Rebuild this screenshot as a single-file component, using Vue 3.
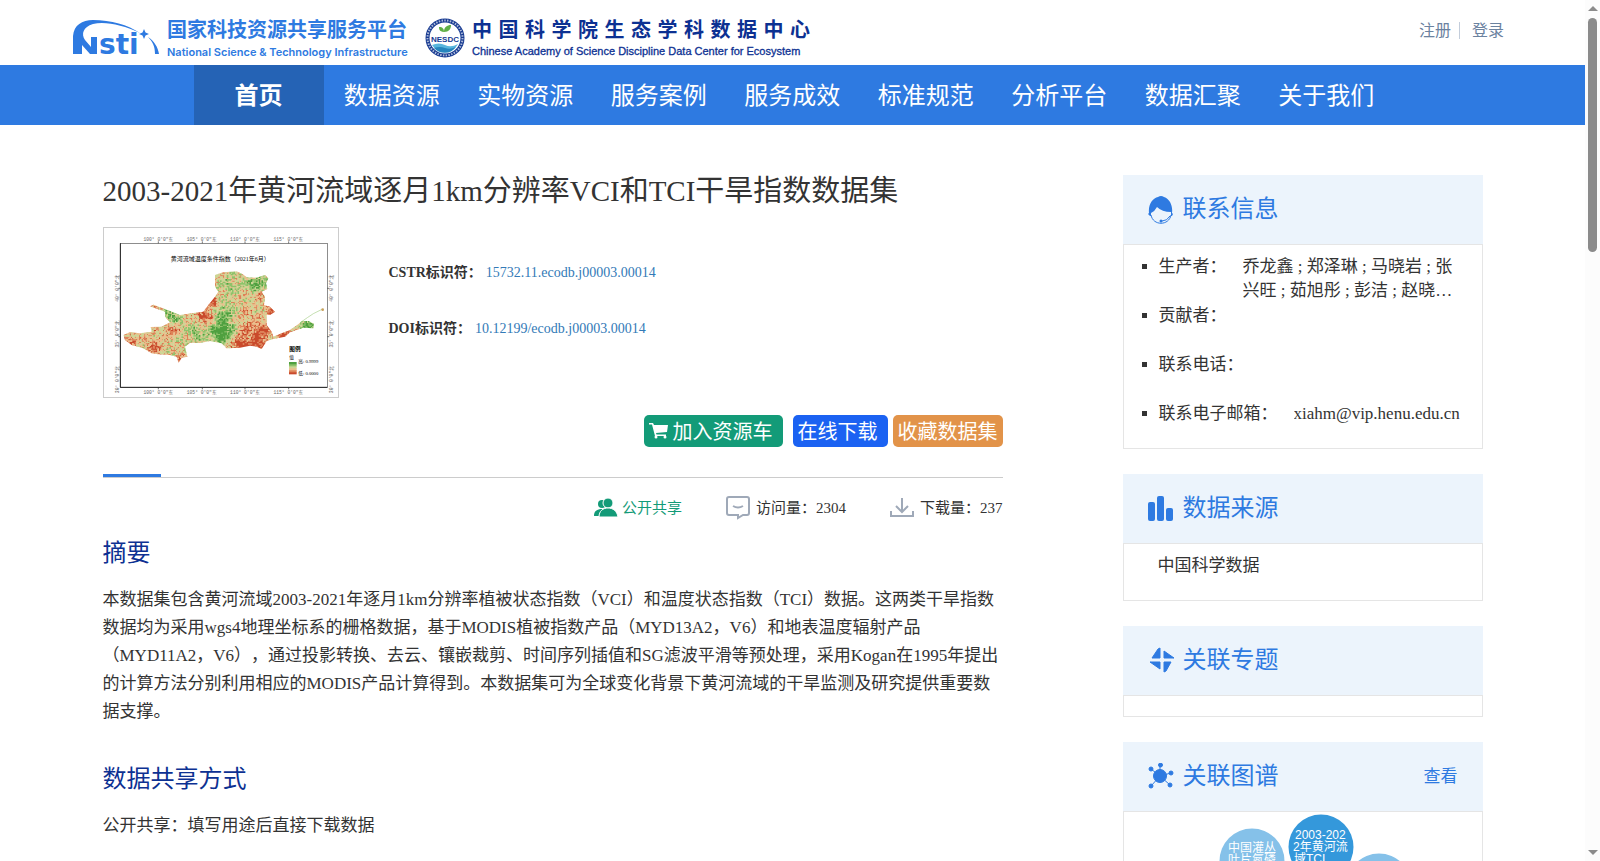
<template>
  <div class="window">
    <div class="page">
      <header class="top">
        <a class="brand" href="#">
          <svg class="nsti" viewBox="0 0 88 38" role="img" aria-label="Nsti">
            <path d="M0 34V16C1 5 9 0 20 0 38 0 55 5 67 13 50 5 32 1 20 4 10 7 8 14 12 20L18 27V17H24V34H17L9 25V34Z" />
            <path d="M71 9l1.500 3.500 3.500 1.500-3.500 1.500-1.500 3.500-1.500-3.500-3.500-1.500 3.500-1.500z" />
            <path d="M75 17c6 4 10 10 11 17h-4c0-7-2-12-7-17z" />
            <text x="26" y="34">sti</text>
          </svg>
          <span class="platform">
            <strong>国家科技资源共享服务平台</strong>
            <span>National Science &amp; Technology Infrastructure</span>
          </span>
        </a>
        <a class="brand" href="#">
          <svg class="nesdc" viewBox="0 0 40 40" role="img" aria-label="NESDC">
            <circle cx="20" cy="20" r="19.500" fill="#173a91" />
            <circle cx="20" cy="20" r="17.500" fill="none" stroke="#fff" stroke-width="2" stroke-dasharray="1.500 1.300" opacity=".65" />
            <circle cx="20" cy="20" r="15.500" fill="#fff" />
            <path d="M7 27q7-3 13 0t13-1a15 15 0 0 1-26 1z" fill="#58b5dc" />
            <path d="M9 30q6-2 11 0t11-1a14 14 0 0 1-22 1z" fill="#2685bd" />
            <path d="M19 14c-5 0-5-4-5-5 4 0 5 2 5 5zM19 14c0-5 3-7 7-7 0 4-2 7-7 7z" fill="#5faf45" />
            <text x="20" y="24" text-anchor="middle">NESDC</text>
          </svg>
          <span class="center-name">
            <strong>中国科学院生态学科数据中心</strong>
            <span>Chinese Academy of Science Discipline Data Center for Ecosystem</span>
          </span>
        </a>
        <div class="account">
          <a href="#">注册</a>
          <a href="#">登录</a>
        </div>
      </header>

      <nav class="nav">
        <div class="nav-inner">
          <a v-for="(item, i) in menu" :key="item" href="#" :class="{ active: i === 0 }">{{ item }}</a>
        </div>
      </nav>

      <main class="main">
        <article class="detail">
          <h1>2003-2021年黄河流域逐月1km分辨率VCI和TCI干旱指数数据集</h1>
          <div class="summary">
            <svg class="thumb" viewBox="42 39 702 507" role="img" aria-label="黄河流域温度条件指数">
              <defs>
                <clipPath id="basin">
                  <path :d="basin" />
                </clipPath>
              </defs>
              <rect x="91" y="85" width="621" height="432" fill="none" stroke="#555" stroke-width="2" />
              <path d="M91 85V517M91 517H712" fill="none" stroke="#222" stroke-width="3" />
              <path d="M205 79v6M337 79v6M465 79v6M596 79v6M205 517v6M337 517v6M465 517v6M596 517v6M85 220h6M85 365h6M712 220h6M712 365h6" stroke="#333" stroke-width="2" />
              <g class="ticks">
                <template v-for="(deg, i) in lon" :key="deg">
                  <text :x="205 + i * 130" y="77">{{ deg }}</text>
                  <text :x="205 + i * 130" y="537">{{ deg }}</text>
                </template>
                <template v-for="(deg, i) in lat" :key="deg">
                  <text :transform="`translate(86 ${220 + i * 137}) rotate(-90)`">{{ deg }}</text>
                  <text :transform="`translate(730 ${220 + i * 137}) rotate(-90)`">{{ deg }}</text>
                </template>
              </g>
              <text class="map-title" x="391" y="139">黄河流域温度条件指数（2021年6月）</text>
              <g clip-path="url(#basin)">
                <path v-for="layer in layers" :key="layer.color" :d="layer.d" :fill="layer.color" />
              </g>
              <path d="M632 322l20-14 18-12 26-13" fill="none" stroke="#a7cf8a" stroke-width="2" />
              <circle cx="698" cy="284" r="4" fill="#c9a05c" />
              <text class="legend-title" x="598" y="409">图例</text>
              <text class="legend" x="598" y="431">值</text>
              <rect v-for="(c, i) in ramp" :key="c" x="597" :y="471 - i * 6" width="23" height="7" :fill="c" />
              <text class="legend" x="625" y="445">高: 0.9999</text>
              <text class="legend" x="625" y="481">低: 0.0000</text>
            </svg>
            <dl class="ids">
              <div>
                <dt>CSTR标识符：</dt>
                <dd><a href="#">15732.11.ecodb.j00003.00014</a></dd>
              </div>
              <div>
                <dt>DOI标识符：</dt>
                <dd><a href="#">10.12199/ecodb.j00003.00014</a></dd>
              </div>
            </dl>
          </div>

          <div class="actions">
            <button type="button" class="cart">
              <svg viewBox="0 0 19 17" aria-hidden="true">
                <path d="M0 1h4l1 2h14l-1 7-11 1 .5 1.500H17V14H6L3 2.500H0z" />
                <circle cx="7" cy="15" r="1.500" />
                <circle cx="16" cy="15" r="1.500" />
              </svg>
              加入资源车
            </button>
            <button type="button" class="download">在线下载</button>
            <button type="button" class="collect">收藏数据集</button>
          </div>

          <div class="divider"><span></span></div>

          <div class="stats">
            <span class="open">
              <svg viewBox="0 0 24 20" aria-hidden="true" fill="#139b78">
                <circle cx="8" cy="6" r="4" />
                <path d="M0 18c0-5 3-7 8-7l2 1c-3 1-4 3-5 6z" />
                <circle cx="14" cy="5" r="5" stroke="#fff" />
                <path d="M5 19c0-6 4-9 9-9s9 3 10 9z" stroke="#fff" />
              </svg>
              公开共享
            </span>
            <span>
              <svg viewBox="0 0 24 24" aria-hidden="true" fill="none" stroke="#9fa9b8" stroke-width="2">
                <path d="M3 1h18q2 0 2 2v14q0 2-2 2h-4l-5 3v-3H3q-2 0-2-2V3q0-2 2-2z" />
                <path d="M7 10q5 3 10 0" />
              </svg>
              访问量：2304
            </span>
            <span>
              <svg viewBox="0 0 24 24" aria-hidden="true" fill="none" stroke="#9fa9b8" stroke-width="2">
                <path d="M12 2v13M6 10l6 6 6-6M1 15v5h22v-5" />
              </svg>
              下载量：237
            </span>
          </div>

          <section>
            <h2>摘要</h2>
            <p>本数据集包含黄河流域2003-2021年逐月1km分辨率植被状态指数（VCI）和温度状态指数（TCI）数据。这两类干旱指数数据均为采用wgs4地理坐标系的栅格数据，基于MODIS植被指数产品（MYD13A2，V6）和地表温度辐射产品（MYD11A2，V6），通过投影转换、去云、镶嵌裁剪、时间序列插值和SG滤波平滑等预处理，采用Kogan在1995年提出的计算方法分别利用相应的MODIS产品计算得到。本数据集可为全球变化背景下黄河流域的干旱监测及研究提供重要数据支撑。</p>
          </section>
          <section>
            <h2>数据共享方式</h2>
            <p>公开共享：填写用途后直接下载数据</p>
          </section>
        </article>

        <aside class="side">
          <section class="card">
            <header>
              <svg viewBox="0 0 26 28" aria-hidden="true" fill="#2e7ae1">
                <path d="M1 17C0 8 5 2 10 1q3-2 6 0c6 2 9 9 8 16l1 1-1 2h-1v-4q-9 0-14-5-2 4-6 6v3H2l-2-2z" />
                <path d="M3 19c2 11 18 11 20 0" fill="none" stroke="#2e7ae1" />
                <path d="M22 20q-3 5-8 5" fill="none" stroke="#2e7ae1" />
                <circle cx="13" cy="25" r="1.500" />
              </svg>
              <h3>联系信息</h3>
            </header>
            <ul class="contact">
              <li v-for="c in contacts" :key="c.label">
                <span>{{ c.label }}：</span>
                <span class="value">{{ c.value }}</span>
              </li>
            </ul>
          </section>

          <section class="card">
            <header>
              <svg viewBox="0 1 26 28" aria-hidden="true" fill="#2e7ae1">
                <rect x="0" y="8" width="7" height="19" rx="2" />
                <rect x="9" y="2" width="7" height="25" rx="2" />
                <rect x="18" y="14" width="7" height="13" rx="2" />
              </svg>
              <h3>数据来源</h3>
            </header>
            <p class="source">中国科学数据</p>
          </section>

          <section class="card">
            <header>
              <svg viewBox="0 2 26 28" aria-hidden="true" fill="#2e7ae1" stroke="#2e7ae1" stroke-linejoin="round">
                <path d="M12 3v10H4l6-9zM16 6l10 7H16zM2 17h10v7zM16 17h7l-5 9-2 1z" />
              </svg>
              <h3>关联专题</h3>
            </header>
            <div class="empty"></div>
          </section>

          <section class="card">
            <header>
              <svg viewBox="0 2 26 28" aria-hidden="true" fill="#2e7ae1" stroke="#2e7ae1">
                <path d="M12 15V3M12 15L3 8M12 15l11-3M12 15L3 25M12 15l10 9" />
                <circle cx="12" cy="15" r="6.500" />
                <circle cx="12.500" cy="4" r="2" />
                <circle cx="3" cy="8" r="2" />
                <circle cx="23" cy="12" r="2" />
                <circle cx="3" cy="25" r="2" />
                <circle cx="22" cy="24" r="2" />
              </svg>
              <h3>关联图谱</h3>
              <a href="#">查看</a>
            </header>
            <svg class="graph" viewBox="0 0 358 300" role="img" aria-label="关联图谱">
              <g v-for="n in nodes" :key="n.x">
                <circle :cx="n.x" :cy="n.y" r="32.500" :fill="n.color" />
                <text v-for="(line, i) in n.lines" :key="line" :x="n.tx[i]" :y="n.ty + i * 12">{{ line }}</text>
              </g>
            </svg>
          </section>
        </aside>
      </main>
    </div>

    <div class="scrollbar" aria-hidden="true">
      <i class="up"></i>
      <i class="thumb-bar"></i>
      <i class="down"></i>
    </div>
  </div>
</template>

<script setup>
const menu = ['首页', '数据资源', '实物资源', '服务案例', '服务成效', '标准规范', '分析平台', '数据汇聚', '关于我们']

const contacts = [
  { label: '生产者', value: '乔龙鑫 ; 郑泽琳 ; 马晓岩 ; 张兴旺 ; 茹旭彤 ; 彭洁 ; 赵晓燕 ; 夏浩铭 ; 秦耀辰' },
  { label: '贡献者', value: '' },
  { label: '联系电话', value: '' },
  { label: '联系电子邮箱', value: 'xiahm@vip.henu.edu.cn' }
]

const nodes = [
  { x: 128, y: 49, color: '#85c1e9', lines: ['中国灌丛', '叶片氮磷'], tx: [104, 104], ty: 40 },
  { x: 197, y: 35, color: '#3498db', lines: ['2003-202', '2年黄河流', '域TCI'], tx: [171, 169, 170], ty: 27 },
  { x: 255, y: 74, color: '#85c1e9', lines: [], tx: [], ty: 0 }
]

const lon = ['100° 0′0″东', '105° 0′0″东', '110° 0′0″东', '115° 0′0″东']
const lat = ['40° 0′0″北', '35° 0′0″北', '30° 0′0″北']

const basin = 'M375 180L400 172 440 169 458 178 470 187 500 188 525 180 535 190 528 205 532 222 515 230 525 245 522 270 540 275 555 290 540 300 530 300 530 330 545 350 550 365 575 355 600 345 625 328 635 318 655 318 672 326 670 340 640 338 600 352 585 365 550 372 530 378 515 402 500 395 480 392 450 398 410 400 395 385 360 378 330 384 300 383 285 395 292 425 275 428 266 443 260 425 240 420 205 418 185 415 160 400 125 390 105 375 100 360 120 352 150 355 185 350 182 336 215 335 240 322 225 305 225 290 180 274 190 269 240 288 270 300 305 295 340 290 355 270 375 245 385 230 375 215Z'

const ramp = ['#c94a2c', '#dd8257', '#eabf8c', '#cdd594', '#8fc26a', '#4fa03f']

// x, y, radius, weight (positive = green, negative = red)
const spots = [
  [395, 350, 32, 0.6], [400, 292, 28, 0.3], [500, 205, 28, 0.35], [420, 205, 30, 0.15],
  [650, 328, 20, 0.5], [240, 300, 25, 0.3], [320, 345, 30, 0.2], [340, 302, 26, -0.4],
  [515, 345, 26, -0.4], [450, 390, 32, -0.5], [190, 395, 26, -0.35], [545, 290, 16, -0.4],
  [505, 235, 14, -0.4], [120, 378, 20, -0.35], [580, 360, 18, -0.5], [268, 430, 15, -0.4],
  [365, 262, 16, -0.4], [235, 338, 18, -0.3], [500, 388, 22, -0.4], [205, 280, 12, -0.2],
  [470, 340, 22, -0.25], [465, 290, 35, -0.1]
]

const buildLayers = () => {
  const paths = ramp.map(() => '')
  let seed = 7
  const random = () => {
    seed = (seed * 16807) % 2147483647
    return seed / 2147483647
  }
  for (let y = 168; y < 444; y += 4) {
    for (let x = 98; x < 674; x += 4) {
      let v = 0.46 + (random() - 0.5) * 0.5
      v += Math.sin(x / 11) * Math.cos(y / 9) * 0.1
      for (const [sx, sy, r, w] of spots) {
        v += w * Math.exp(-((x - sx) ** 2 + (y - sy) ** 2) / (r * r))
      }
      const i = Math.max(0, Math.min(5, Math.floor(v * 6)))
      paths[i] += `M${x} ${y}h5v5h-5z`
    }
  }
  return ramp.map((color, i) => ({ color, d: paths[i] }))
}

const layers = buildLayers()
</script>

<style>
body {
  margin: 0;
  overflow: hidden;
}
</style>

<style scoped>
.window {
  display: grid;
  grid-template-columns: minmax(0, 1fr) 15px;
  height: 100vh;
  font-family: "Liberation Serif", "Noto Sans CJK SC", serif;
  text-spacing-trim: space-all;
  color: #333;
  background: #fff;
}
.page {
  overflow: hidden;
}
a {
  color: inherit;
  text-decoration: none;
}
h1, h2, h3, p, ul, dl, dd {
  margin: 0;
  padding: 0;
  font-weight: normal;
}

.top {
  display: flex;
  height: 65px;
  padding: 0 81px 0 73px;
}
.brand {
  display: flex;
  align-items: flex-start;
  white-space: nowrap;
}
.nsti {
  width: 88px;
  height: 38px;
  margin: 20px 6px 0 0;
  fill: #2e7ae1;
}
.nsti text {
  font: bold 28px "DejaVu Sans", sans-serif;
}
.platform, .center-name {
  display: flex;
  flex-direction: column;
  padding-top: 18px;
}
.platform {
  width: 258px;
  color: #2e7ae1;
  font-family: Inter, "Noto Sans CJK SC", sans-serif;
}
.platform strong, .center-name strong {
  font-size: 20px;
  line-height: 25px;
}
.platform span {
  font-size: 11px;
  font-weight: 600;
  line-height: 18px;
}
.nesdc {
  width: 40px;
  height: 40px;
  margin: 18px 7px 0 0;
}
.nesdc text {
  font: bold 8px "Liberation Sans", sans-serif;
  fill: #173a91;
}
.center-name {
  width: 338px;
  color: #0d3192;
  font-family: "Liberation Sans", "Noto Sans CJK SC", sans-serif;
}
.center-name strong {
  text-align-last: justify;
}
.center-name span {
  font-size: 11px;
  line-height: 16px;
  -webkit-text-stroke: 0.3px #0d3192;
}
.account {
  display: flex;
  align-items: center;
  height: 17px;
  margin: 22px 0 0 auto;
  color: #6b829f;
  font-size: 16px;
  line-height: 17px;
}
.account a + a {
  margin-left: 8px;
  padding-left: 12px;
  border-left: 1px solid #c3cddb;
}

.nav {
  background: #2e7ae1;
}
.nav-inner {
  display: flex;
  max-width: 1198px;
  margin: 0 auto;
}
.nav a {
  flex: 1;
  padding: 2px 0 0 3px;
  color: #fff;
  font-size: 24px;
  line-height: 58px;
  text-align: center;
}
.nav a.active {
  flex: 0 0 130px;
  padding-left: 0;
  background: #2563b5;
  font-weight: bold;
}

.main {
  display: grid;
  grid-template-columns: minmax(0, 900px) 360px;
  justify-content: space-between;
  max-width: 1380px;
  margin: 0 auto;
  padding-top: 50px;
}
h1 {
  font-size: 29px;
  line-height: 32px;
}
.summary {
  display: flex;
  gap: 50px;
  margin-top: 20px;
}
.thumb {
  box-sizing: border-box;
  width: 236px;
  height: 171px;
  border: 1px solid #ccc;
}
.ticks text {
  font: 14px "Liberation Mono", "Noto Sans CJK SC", monospace;
  fill: #666;
  text-anchor: middle;
}
.map-title {
  font-size: 18px;
  text-anchor: middle;
}
.legend-title {
  font-size: 17px;
  font-weight: bold;
}
.legend {
  font-size: 14px;
}
.ids {
  padding-top: 18px;
  font-size: 14px;
}
.ids div {
  display: flex;
  gap: 4px;
  line-height: 56px;
}
.ids dt {
  font-weight: bold;
}
.ids a {
  color: #337ab7;
}

.actions {
  display: flex;
  justify-content: flex-end;
  gap: 5px;
  margin-top: 17px;
}
.actions button {
  display: flex;
  align-items: center;
  gap: 5px;
  height: 32px;
  padding: 0 5px 2px;
  border: 0;
  border-radius: 5px;
  color: #fff;
  font-family: inherit;
  font-size: 20px;
}
.actions svg {
  width: 19px;
  height: 17px;
  fill: #fff;
}
.actions .cart {
  margin-right: 5px;
  padding-right: 10px;
  background: #139b78;
}
.actions .download {
  padding-right: 10px;
  background: #1b62f2;
}
.actions .collect {
  background: #e29349;
}

.divider {
  margin-top: 27px;
  border-bottom: 1px solid #ccc;
}
.divider span {
  display: block;
  width: 58px;
  height: 3px;
  background: #2e7ae1;
}
.stats {
  display: flex;
  justify-content: flex-end;
  gap: 44px;
  margin-top: 18px;
  font-size: 15px;
  line-height: 24px;
}
.stats span {
  display: flex;
  align-items: center;
  gap: 6px;
}
.stats svg {
  width: 24px;
  height: 24px;
}
.stats .open {
  gap: 4px;
  color: #139b78;
}
.detail h2 {
  margin-top: 17px;
  color: #0d3192;
  font-size: 24px;
  line-height: 32px;
}
.detail p {
  margin-top: 17px;
  font-size: 17px;
  line-height: 28px;
}
.detail section + section {
  margin-top: 37px;
}
.detail section + section h2 {
  margin-top: 0;
}

.card {
  margin-bottom: 25px;
}
.card header {
  display: flex;
  align-items: center;
  height: 69px;
  padding: 0 25px;
  background: #ecf4fc;
  color: #2e7ae1;
}
.card header svg {
  width: 26px;
  height: 28px;
  margin-right: 9px;
}
.card h3 {
  padding-bottom: 2px;
  font-size: 24px;
  line-height: 32px;
}
.card header a {
  margin-left: auto;
  font-size: 17px;
  line-height: 24px;
}
.contact, .source, .empty, .graph {
  box-sizing: border-box;
  border: 1px solid #e5e5e5;
  font-size: 17px;
  line-height: 24px;
}
.contact {
  padding-top: 10px;
  list-style: none;
}
.contact li {
  display: flex;
  gap: 16px;
  height: 49px;
  padding: 0 20px 0 18px;
}
.contact li:last-child {
  height: 46px;
}
.contact li::before {
  content: "";
  flex: none;
  width: 5px;
  height: 5px;
  margin: 9px -4px 0 0;
  background: #333;
}
.contact span {
  flex: none;
}
.contact .value {
  flex: 0 1 auto;
  display: -webkit-box;
  max-width: 212px;
  max-height: 48px;
  overflow: hidden;
  -webkit-box-orient: vertical;
  -webkit-line-clamp: 2;
}
.source {
  height: 58px;
  padding: 10px 34px;
}
.empty {
  height: 22px;
}
.graph {
  display: block;
  width: 100%;
}
.graph text {
  font: 12px "Liberation Sans", "Noto Sans CJK SC", sans-serif;
  fill: #fff;
}

.scrollbar {
  display: flex;
  flex-direction: column;
  align-items: center;
  background: #fcfcfc;
}
.scrollbar .up, .scrollbar .down {
  border: 5px solid transparent;
}
.scrollbar .up {
  margin-top: 1px;
  border-bottom-color: #8b8b8b;
}
.scrollbar .down {
  margin: auto 0 1px;
  border-top-color: #8b8b8b;
}
.thumb-bar {
  width: 9px;
  height: 234px;
  margin-top: 7px;
  border-radius: 5px;
  background: #8b8b8b;
}
</style>
